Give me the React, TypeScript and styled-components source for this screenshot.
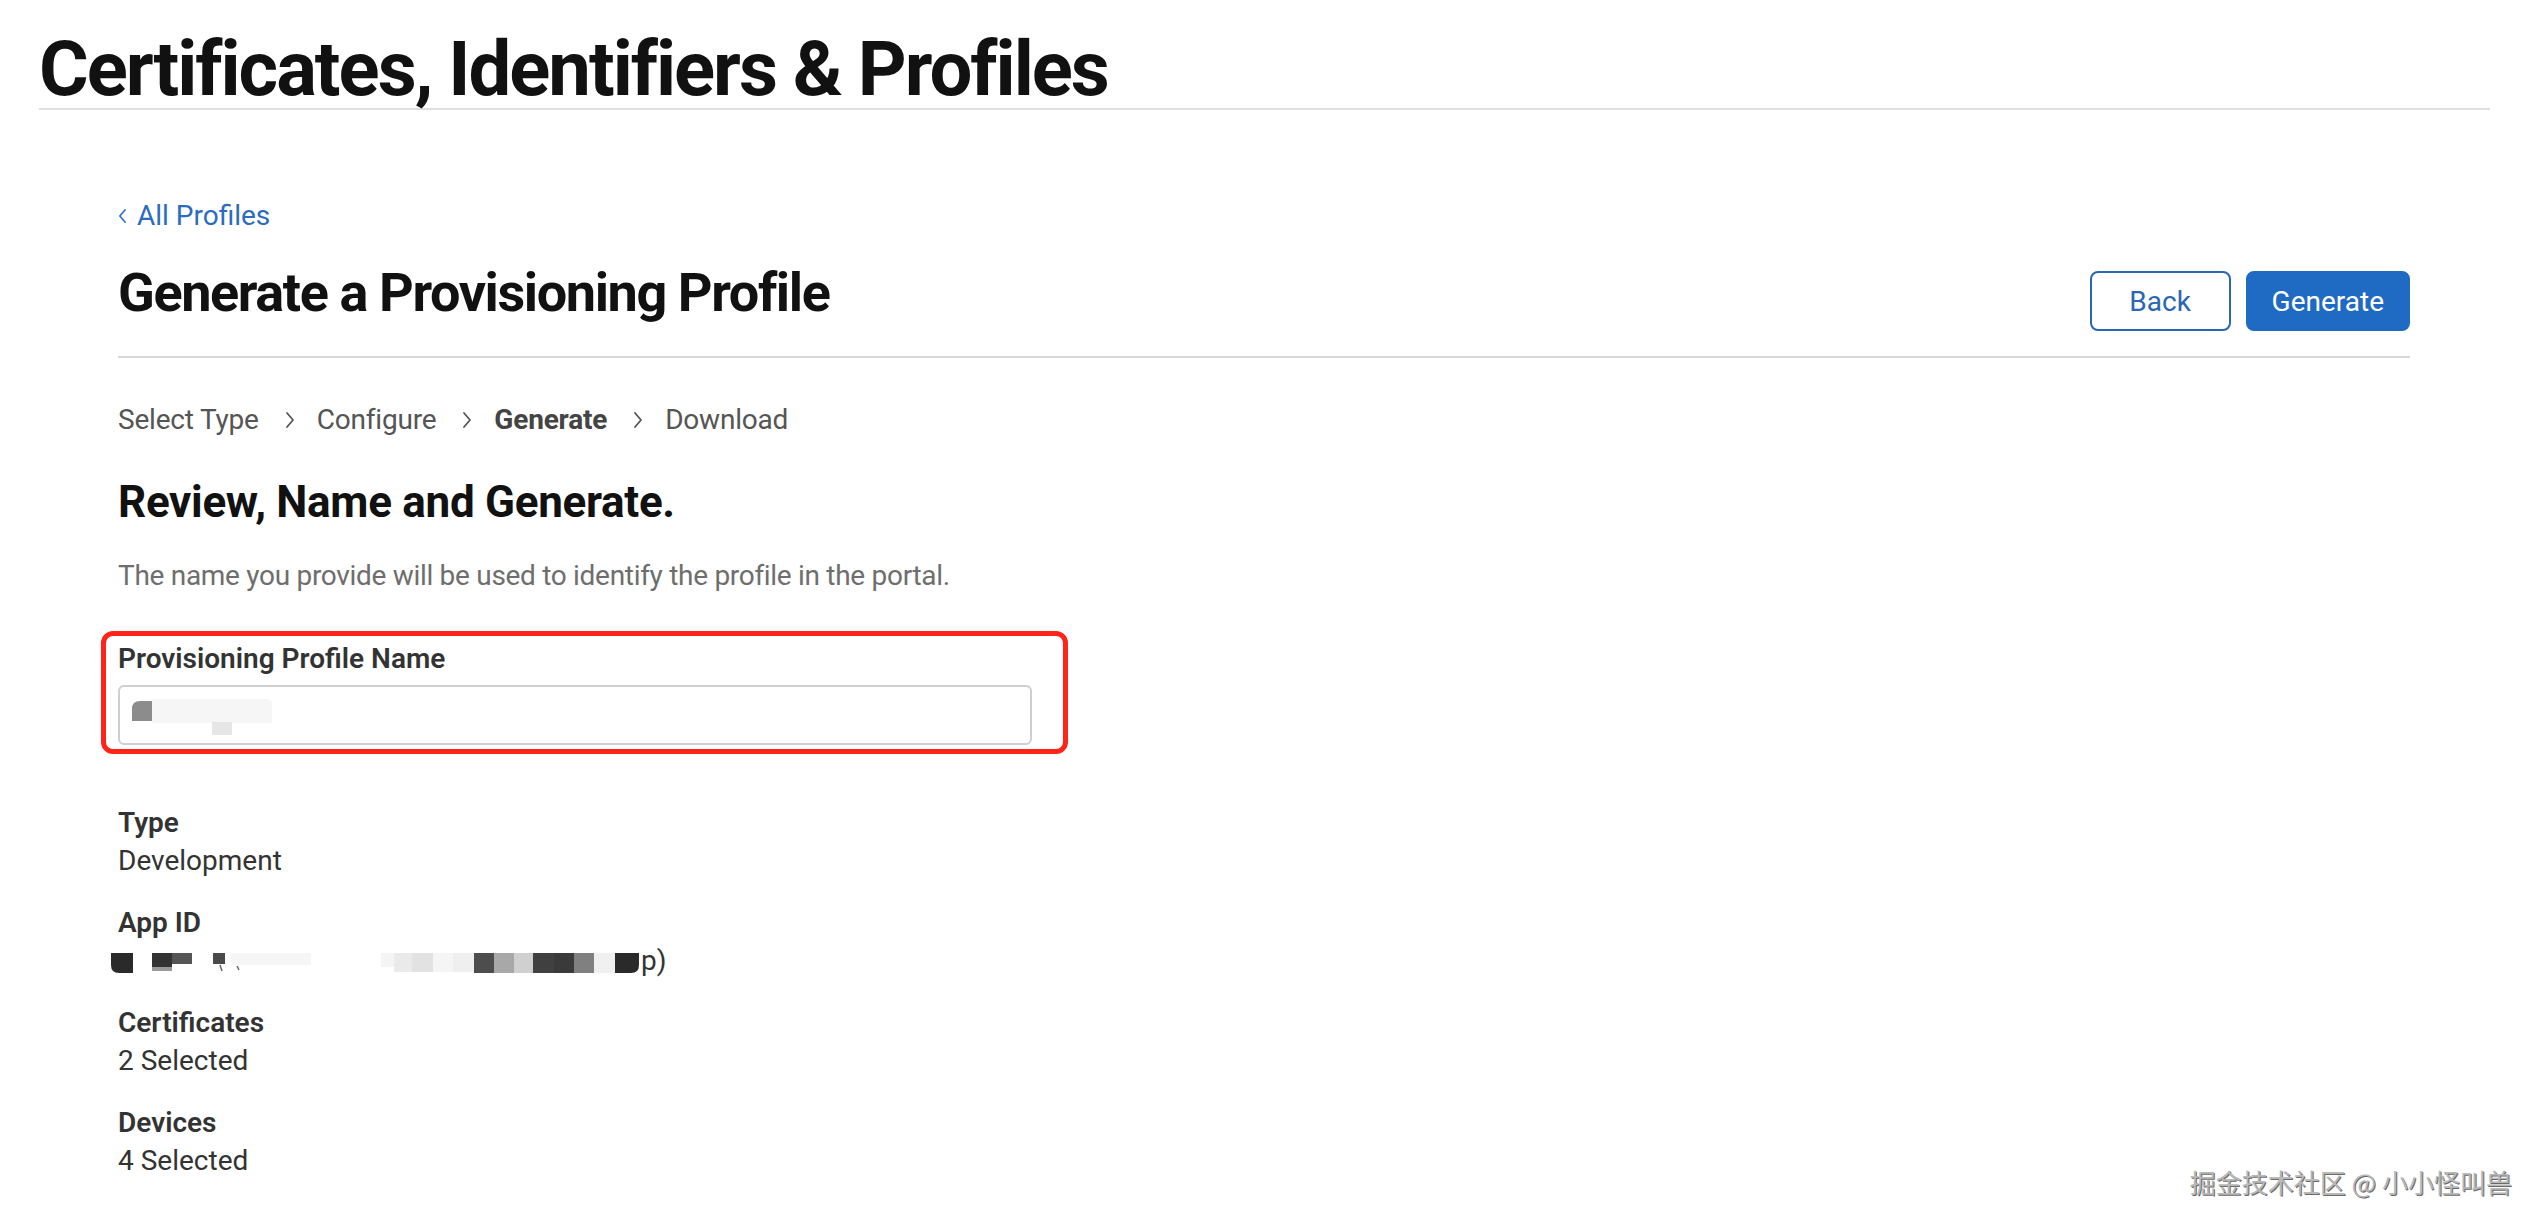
import React from 'react';
import styled, { createGlobalStyle } from 'styled-components';

const GlobalStyle = createGlobalStyle`
  * {
    box-sizing: border-box;
  }

  html,
  body {
    margin: 0;
    padding: 0;
    background: #fff;
  }

  body {
    font-family: Roboto, 'Liberation Sans', Arial, sans-serif;
    color: #333;
    -webkit-font-smoothing: antialiased;
  }
`;

const steps = [
  { title: 'Select Type' },
  { title: 'Configure' },
  { title: 'Generate', current: true },
  { title: 'Download' },
];

const details = [
  { label: 'Type', value: 'Development' },
  { label: 'App ID', value: null },
  { label: 'Certificates', value: '2 Selected' },
  { label: 'Devices', value: '4 Selected' },
];

// mosaic blocks that hide the app id: [x, width, colour, y, height]
const appIdMosaic: [number, number, string, number, number][] = [
  [270, 100, '#f4f4f4', 0, 14],
  [120, 80, '#f6f6f6', 0, 12],
  [283, 20, '#eaeaea', 0, 19],
  [301, 21, '#e2e2e2', 0, 19],
  [322, 20, '#f5f5f5', 0, 19],
  [342, 21, '#efefef', 0, 19],
  [41, 20, '#333', 0, 14],
  [41, 20, '#9a9a9a', 14, 4],
  [61, 20, '#555', 0, 11],
  [102, 12, '#4a4a4a', 0, 11],
  [363, 20, '#4d4d4d', 0, 20],
  [383, 20, '#a8a8a8', 0, 20],
  [403, 19, '#d0d0d0', 0, 20],
  [422, 21, '#404040', 0, 20],
  [443, 20, '#3a3a3a', 0, 20],
  [463, 20, '#808080', 0, 20],
  [483, 21, '#f0f0f0', 0, 20],
];

function Chevron({ left }: { left?: boolean }) {
  return (
    <svg width="10" height="18" viewBox="0 0 10 18" fill="none">
      <path
        d={left ? 'M8 2 L2 9 L8 16' : 'M2 2 L8 9 L2 16'}
        stroke="currentColor"
        strokeWidth="1.8"
        strokeLinecap="round"
        strokeLinejoin="round"
      />
    </svg>
  );
}

function App() {
  return (
    <>
      <GlobalStyle />
      <Page>
        <Header>
          <SiteTitle>Certificates, Identifiers &amp; Profiles</SiteTitle>
        </Header>

        <Main>
          <BackLink href="#">
            <Chevron left />
            All Profiles
          </BackLink>

          <TitleRow>
            <PageTitle>Generate a Provisioning Profile</PageTitle>
            <Actions>
              <Button $variant="outline">Back</Button>
              <Button>Generate</Button>
            </Actions>
          </TitleRow>

          <Steps>
            {steps.map(({ title, current }, i) => (
              <Step key={title} $current={current}>
                {title}
                {i < steps.length - 1 && (
                  <StepArrow>
                    <Chevron />
                  </StepArrow>
                )}
              </Step>
            ))}
          </Steps>

          <SectionTitle>Review, Name and Generate.</SectionTitle>
          <Description>
            The name you provide will be used to identify the profile in the portal.
          </Description>

          <Field>
            <FieldLabel>Provisioning Profile Name</FieldLabel>
            <TextBox role="textbox">
              <svg width="160" height="40" viewBox="0 0 160 40">
                <path d="M32 4 L146 4 Q152 4 152 10 L152 28 L32 28 Z" fill="#f6f6f6" />
                <rect x="92" y="27" width="20" height="14" fill="#e6e6e6" />
                <path d="M12 14 Q12 6 20 6 L32 6 L32 26 L12 26 Z" fill="#8c8c8c" />
              </svg>
            </TextBox>
            <Highlight />
          </Field>

          <Details>
            {details.map(({ label, value }) => (
              <DetailItem key={label}>
                <DetailLabel>{label}</DetailLabel>
                {value ? (
                  <DetailValue>{value}</DetailValue>
                ) : (
                  <DetailValue>
                    <Mosaic width="530" height="22" viewBox="0 0 530 22">
                      {appIdMosaic.map(([x, w, c, y, h], i) => (
                        <rect key={i} x={x} y={y} width={w} height={h} fill={c} />
                      ))}
                      <path d="M0 0 L22 0 L22 20 L8 20 Q0 20 0 12 Z" fill="#2a2a2a" />
                      <path d="M504 0 L528 0 L528 12 Q528 20 520 20 L504 20 Z" fill="#2a2a2a" />
                      <path d="M109 12 L111 18 M126 13 L128 17" stroke="#666" strokeWidth="1.5" />
                    </Mosaic>
                    p)
                  </DetailValue>
                )}
              </DetailItem>
            ))}
          </Details>
        </Main>

        <Watermark>掘金技术社区 @ 小小怪叫兽</Watermark>
      </Page>
    </>
  );
}

const Page = styled.div`
  position: relative;
  min-height: 100vh;
  overflow: hidden;
`;

const Header = styled.header`
  margin: 0 42px 0 39px;
  padding-top: 31px;
  padding-bottom: 1px;
  border-bottom: 2px solid #dedede;
`;

const SiteTitle = styled.h1`
  margin: 0;
  font-size: 76px;
  line-height: 76px;
  font-weight: 700;
  letter-spacing: -2px;
  color: #111;
`;

const Main = styled.main`
  padding: 86px 122px 0 118px;
`;

const BackLink = styled.a`
  display: inline-flex;
  align-items: center;
  gap: 10px;
  font-size: 28px;
  line-height: 40px;
  color: #2c6cc0;
  text-decoration: none;

  svg {
    width: 9px;
    height: 16px;
  }
`;

const TitleRow = styled.div`
  display: flex;
  justify-content: space-between;
  align-items: flex-start;
  margin-top: 25px;
  padding-bottom: 25px;
  border-bottom: 2px solid #d8d8d8;
`;

const PageTitle = styled.h2`
  margin: 0;
  font-size: 54px;
  line-height: 64px;
  font-weight: 700;
  letter-spacing: -1.4px;
  color: #111;
`;

const Actions = styled.div`
  display: flex;
  gap: 15px;
  margin-top: 10px;
`;

const Button = styled.button<{ $variant?: 'outline' }>`
  height: 60px;
  padding: 0 24px;
  border-radius: 8px;
  font-family: inherit;
  font-size: 28px;
  font-weight: 400;
  cursor: pointer;
  border: 2px solid;
  background: ${({ $variant }) => ($variant === 'outline' ? '#fff' : '#1f6ac3')};
  color: ${({ $variant }) => ($variant === 'outline' ? '#2a66b2' : '#fff')};
  border-color: ${({ $variant }) => ($variant === 'outline' ? '#2a66b2' : '#1f6ac3')};
  min-width: ${({ $variant }) => ($variant === 'outline' ? '141px' : '160px')};
`;

const Steps = styled.ol`
  display: flex;
  margin: 42px 0 0;
  padding: 0;
  list-style: none;
`;

const Step = styled.li<{ $current?: boolean }>`
  display: flex;
  align-items: center;
  font-size: 28px;
  line-height: 40px;
  letter-spacing: -0.2px;
  font-weight: ${({ $current }) => ($current ? 700 : 400)};
  color: ${({ $current }) => ($current ? '#444' : '#555')};
`;

const StepArrow = styled.span`
  display: flex;
  margin: 0 22px 0 26px;
  color: #555;
`;

const SectionTitle = styled.h3`
  margin: 34px 0 0;
  font-size: 44px;
  line-height: 56px;
  font-weight: 700;
  letter-spacing: -0.3px;
  color: #111;
`;

const Description = styled.p`
  margin: 26px 0 0;
  font-size: 28px;
  line-height: 40px;
  letter-spacing: -0.3px;
  color: #6e6e6e;
`;

const Field = styled.div`
  position: relative;
  width: 914px;
  margin-top: 43px;
`;

const FieldLabel = styled.label`
  display: block;
  font-size: 28px;
  line-height: 40px;
  font-weight: 600;
  color: #333;
`;

const TextBox = styled.div`
  display: flex;
  align-items: center;
  height: 60px;
  margin-top: 6px;
  border: 2px solid #cfcfcf;
  border-radius: 6px;
  background: #fff;
`;

const Highlight = styled.span`
  position: absolute;
  top: -8px;
  left: -17px;
  right: -36px;
  bottom: -9px;
  border: 5px solid #ff2419;
  border-radius: 12px;
  pointer-events: none;
`;

const Details = styled.dl`
  display: flex;
  flex-direction: column;
  gap: 24px;
  margin: 59px 0 0;
`;

const DetailItem = styled.div``;

const DetailLabel = styled.dt`
  font-size: 28px;
  line-height: 38px;
  font-weight: 600;
  color: #333;
`;

const DetailValue = styled.dd`
  display: flex;
  align-items: center;
  margin: 0;
  font-size: 28px;
  line-height: 38px;
  color: #333;
`;

const Mosaic = styled.svg`
  margin-left: -7px;
  margin-top: 6px;
`;

const Watermark = styled.div`
  position: absolute;
  right: 20px;
  bottom: 22px;
  font-family: 'Noto Sans CJK SC', sans-serif;
  font-size: 26px;
  line-height: 32px;
  font-weight: 400;
  color: #b8b8b8;
  text-shadow: 1px 1px 0 #6a6a6a, -1px -1px 0 #fff;
`;

export default App;
